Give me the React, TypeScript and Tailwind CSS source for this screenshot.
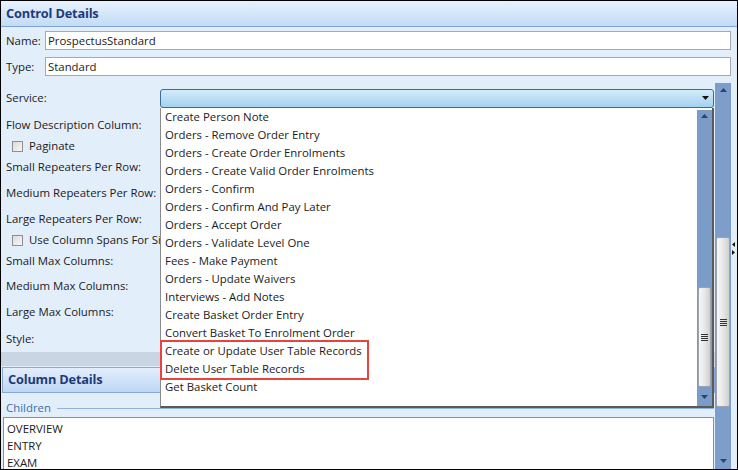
import React from 'react';

const services = [
  'Create Person Note',
  'Orders - Remove Order Entry',
  'Orders - Create Order Enrolments',
  'Orders - Create Valid Order Enrolments',
  'Orders - Confirm',
  'Orders - Confirm And Pay Later',
  'Orders - Accept Order',
  'Orders - Validate Level One',
  'Fees - Make Payment',
  'Orders - Update Waivers',
  'Interviews - Add Notes',
  'Create Basket Order Entry',
  'Convert Basket To Enrolment Order',
  'Create or Update User Table Records',
  'Delete User Table Records',
  'Get Basket Count',
];

function ArrowUp() {
  return (
    <svg width="7" height="4" viewBox="0 0 7 4">
      <path d="M0 4 L3.5 0 L7 4 Z" fill="#2c4566" />
    </svg>
  );
}

function ArrowDown() {
  return (
    <svg width="7" height="4" viewBox="0 0 7 4">
      <path d="M0 0 L3.5 4 L7 0 Z" fill="#2c4566" />
    </svg>
  );
}

function Thumb({ className }: { className: string }) {
  return (
    <div
      className={`flex shrink-0 items-center justify-center rounded-[2px] border border-[#9aa3ad] bg-gradient-to-r from-[#f7f7f7] via-[#e8e8e8] to-[#cfcfcf] ${className}`}
    >
      <div className="flex flex-col gap-[1px]">
        <div className="h-[1px] w-[7px] bg-[#333]" />
        <div className="h-[1px] w-[7px] bg-[#333]" />
        <div className="h-[1px] w-[7px] bg-[#333]" />
        <div className="h-[1px] w-[7px] bg-[#333]" />
      </div>
    </div>
  );
}

function Checkbox() {
  return (
    <div className="h-[11px] w-[11px] shrink-0 border border-[#8e8f8f] bg-gradient-to-br from-[#dcdcdc] to-[#f6f6f6]" />
  );
}

function Label({ mt, children }: { mt: string; children: React.ReactNode }) {
  return <div className={`flex h-[18px] shrink-0 items-center whitespace-nowrap pl-[5px] ${mt}`}>{children}</div>;
}

export default function App() {
  return (
    <div
      className="relative flex h-[470px] w-[738px] flex-col overflow-hidden border border-black bg-[#e3eefb] text-[11.4px] text-[#1b1b1b]"
      style={{ fontFamily: '"Open Sans", "Noto Sans", sans-serif' }}
    >
      <div className="flex h-[26px] shrink-0 items-center border-b border-[#7fa4d4] bg-gradient-to-b from-[#e8f2fe] to-[#c2dbf6] pl-[5px]">
        <span className="text-[12.8px] font-bold tracking-[-0.2px] text-[#1f3b77]">Control Details</span>
      </div>

      <div className="mt-[4px] flex h-[19px] shrink-0 items-center pl-[5px] pr-[6px]">
        <span className="w-[39px]">Name:</span>
        <div className="flex h-[19px] flex-1 items-center border border-[#a9a9a9] bg-white pl-[2px]">ProspectusStandard</div>
      </div>
      <div className="mt-[7px] flex h-[19px] shrink-0 items-center pl-[5px] pr-[6px]">
        <span className="w-[39px]">Type:</span>
        <div className="flex h-[19px] flex-1 items-center border border-[#a9a9a9] bg-white pl-[2px]">Standard</div>
      </div>

      <div className="mt-[7px] flex min-h-0 flex-1 overflow-hidden">
        <div className="relative flex w-[714px] flex-col">
          <div className="mt-[6px] flex h-[18px] shrink-0 items-center">
            <span className="w-[159px] pl-[5px]">Service:</span>
            <div className="flex h-[19px] w-[554px] items-center justify-end rounded-[3px] border border-[#3d6c91] bg-gradient-to-b from-[#d2ebfa] to-[#a4d2ef] pr-[4px]">
              <svg width="7" height="4" viewBox="0 0 7 4">
                <path d="M0 0 L3.5 4 L7 0 Z" fill="#111" />
              </svg>
            </div>
          </div>
          <Label mt="mt-[9px]">Flow Description Column:</Label>
          <div className="mt-[3px] flex h-[18px] shrink-0 items-center gap-[6px] pl-[11px]">
            <Checkbox />
            <span>Paginate</span>
          </div>
          <Label mt="mt-[3px]">Small Repeaters Per Row:</Label>
          <Label mt="mt-[8px]">Medium Repeaters Per Row:</Label>
          <Label mt="mt-[8px]">Large Repeaters Per Row:</Label>
          <div className="mt-[3px] flex h-[18px] w-[159px] shrink-0 items-center gap-[6px] overflow-hidden whitespace-nowrap pl-[11px]">
            <Checkbox />
            <span>Use Column Spans For Sizes</span>
          </div>
          <Label mt="mt-[3px]">Small Max Columns:</Label>
          <Label mt="mt-[7px]">Medium Max Columns:</Label>
          <Label mt="mt-[8px]">Large Max Columns:</Label>
          <Label mt="mt-[9px]">Style:</Label>

          <div className="mt-[4px] h-[14px] shrink-0 bg-[#c9d5e2]" />
          <div className="ml-[1px] mt-[1px] flex h-[26px] shrink-0 items-center border border-[#86a9d6] bg-gradient-to-b from-[#e2eefd] to-[#bed7f3] pl-[5px]">
            <span className="text-[12.8px] font-bold tracking-[-0.2px] text-[#1f3b77]">Column Details</span>
          </div>
          <div className="flex h-[24px] shrink-0 items-center gap-[6px] pl-[5px] pr-[1px] pt-[6px]">
            <span className="text-[#3a6db3]">Children</span>
            <div className="h-[1px] flex-1 bg-[#8fb3de]" />
          </div>
          <div className="ml-[2px] flex w-[711px] flex-1 flex-col border border-[#8a8f98] bg-white pl-[3px] pt-[2px] leading-[17px]">
            <span>OVERVIEW</span>
            <span>ENTRY</span>
            <span>EXAM</span>
          </div>

          <div className="absolute left-[159px] top-[25px] h-[300px] w-[554px] border-b-2 border-l border-r-2 border-b-[#5a5a5a] border-l-[#8a8a8a] border-r-[#5a5a5a] bg-white">
            <div className="flex flex-col pl-[4px]">
              {services.map((s) => (
                <div key={s} className="flex h-[18px] items-center whitespace-nowrap">
                  {s}
                </div>
              ))}
            </div>
            <div className="absolute left-[-1px] top-[232px] h-[40px] w-[209px] border-2 border-[#e8433f]" />
            <div className="absolute right-0 top-[2px] flex h-[296px] w-[15px] flex-col items-center bg-[#7b9cc8]">
              <div className="flex h-[12px] shrink-0 items-center">
                <ArrowUp />
              </div>
              <div className="h-[165px] shrink-0" />
              <Thumb className="h-[100px] w-[13px]" />
              <div className="flex flex-1 items-center">
                <ArrowDown />
              </div>
            </div>
          </div>
        </div>

        <div className="flex w-[16px] flex-col items-center bg-[#7d9ecb]">
          <div className="flex h-[14px] shrink-0 items-center">
            <ArrowUp />
          </div>
          <div className="h-[140px] shrink-0" />
          <Thumb className="h-[170px] w-[14px]" />
          <div className="flex flex-1 items-end pb-[6px]">
            <ArrowDown />
          </div>
        </div>
        <div className="relative w-[6px]">
          <div className="absolute left-[1px] top-[159px] flex flex-col gap-[3px]">
            <svg width="3" height="5" viewBox="0 0 3 5">
              <path d="M3 0 L0 2.5 L3 5 Z" fill="#111" />
            </svg>
            <svg width="3" height="5" viewBox="0 0 3 5">
              <path d="M0 0 L3 2.5 L0 5 Z" fill="#111" />
            </svg>
          </div>
        </div>
      </div>
    </div>
  );
}
